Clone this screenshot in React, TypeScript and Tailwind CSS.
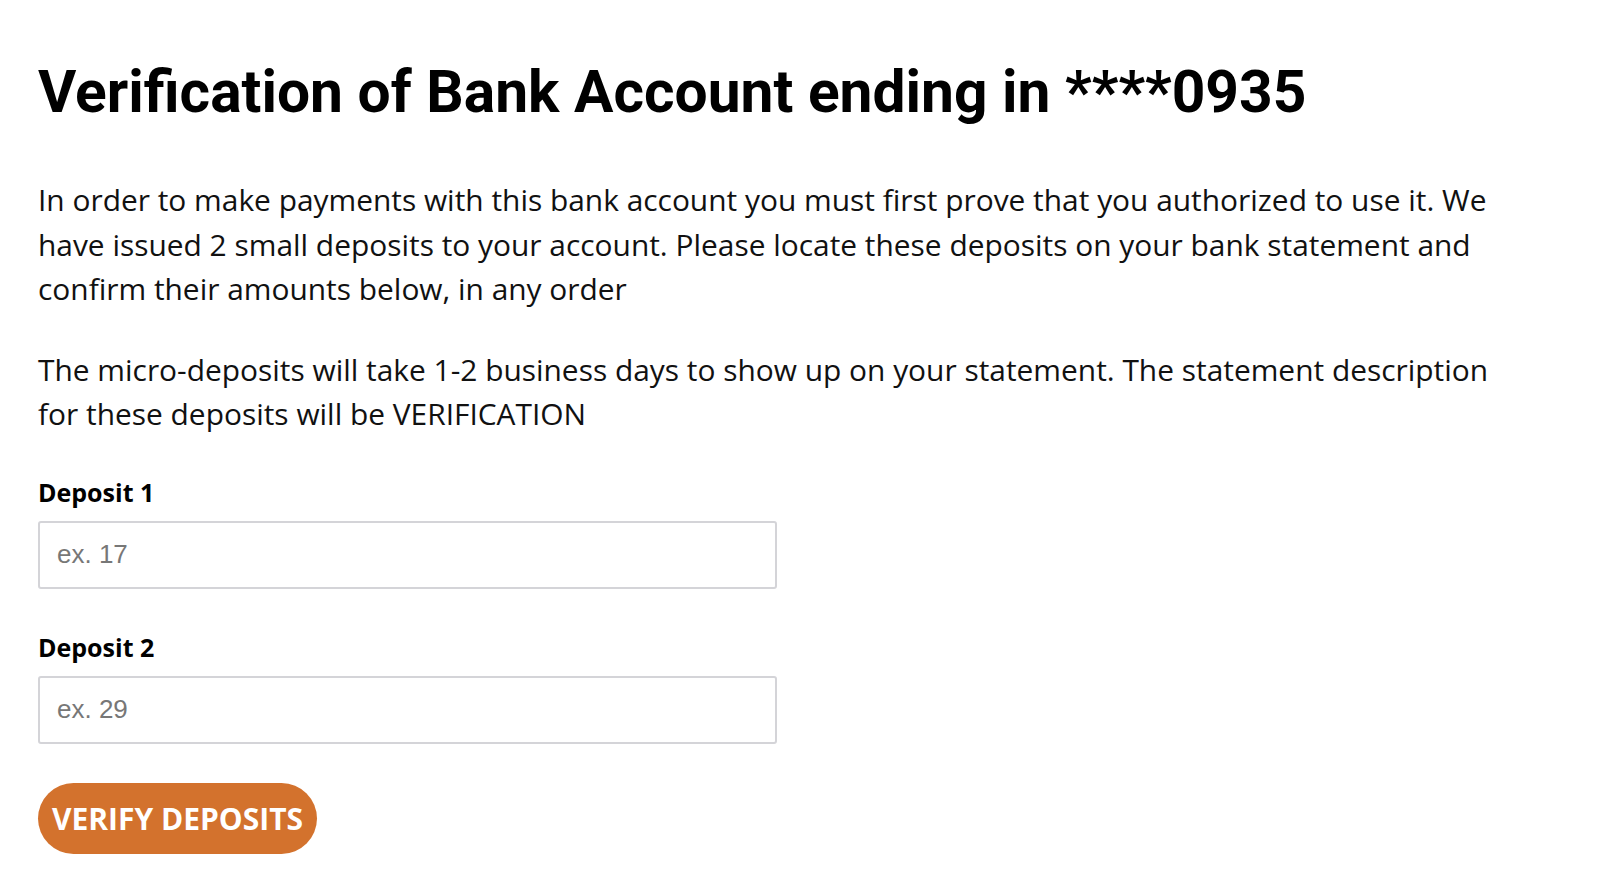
export default function App() {
  return (
    <div className="min-h-screen bg-white px-[38px] pt-[57px] text-black">
      <h1 className="font-['Roboto',sans-serif] text-[58.7px] font-bold leading-[70px]">
        Verification of Bank Account ending in ****0935
      </h1>

      <div className="mt-[51px] max-w-[1480px] font-['Open_Sans',sans-serif] text-[29.9px] leading-[44.6px] text-[#111]">
        <p>
          In order to make payments with this bank account you must first prove that you authorized to use it. We
          have issued 2 small deposits to your account. Please locate these deposits on your bank statement and
          confirm their amounts below, in any order
        </p>
        <p className="mt-[36px]">
          The micro-deposits will take 1-2 business days to show up on your statement. The statement description
          for these deposits will be VERIFICATION
        </p>
      </div>

      <form className="mt-[38px] font-['Open_Sans',sans-serif]" onSubmit={(e) => e.preventDefault()}>
        <label className="block">
          <span className="block text-[25px] font-bold leading-[34px]">Deposit 1</span>
          <input
            type="text"
            placeholder="ex. 17"
            className="mt-[12px] block h-[68px] w-[739px] rounded-[3px] border-2 border-[#d4d4d8] px-[17px] font-['Liberation_Sans',Arial,sans-serif] text-[26px] placeholder:text-[#777] outline-none"
          />
        </label>
        <label className="mt-[41px] block">
          <span className="block text-[25px] font-bold leading-[34px]">Deposit 2</span>
          <input
            type="text"
            placeholder="ex. 29"
            className="mt-[12px] block h-[68px] w-[739px] rounded-[3px] border-2 border-[#d4d4d8] px-[17px] font-['Liberation_Sans',Arial,sans-serif] text-[26px] placeholder:text-[#777] outline-none"
          />
        </label>
        <button
          type="submit"
          className="mt-[39px] h-[71px] w-[279px] rounded-full bg-[#d3722d] text-[30px] font-bold text-white"
        >
          VERIFY DEPOSITS
        </button>
      </form>
    </div>
  );
}
